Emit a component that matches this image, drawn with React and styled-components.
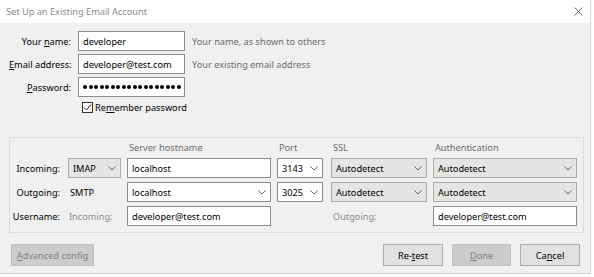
import React from 'react'
import styled, { createGlobalStyle } from 'styled-components'

const GlobalStyle = createGlobalStyle`
  html, body {
    margin: 0;
    padding: 0;
    background: #ffffff;
  }
  body {
    font-family: "Noto Sans", "Open Sans", sans-serif;
    font-size: 9.2px;
    line-height: 13px;
    color: #000;
  }
`

const Dialog = styled.div`
  width: 590px;
  height: 273px;
  border-right: 1px solid #d7d3c9;
  border-bottom: 1px solid #cfcfcf;
  background: #f0f0f0;
  display: flex;
  flex-direction: column;
  overflow: hidden;
`

const TitleBar = styled.div`
  height: 23px;
  flex: none;
  background: #fff;
  display: flex;
  align-items: center;
  justify-content: space-between;
  padding: 0 7px 0 6px;
  color: #8a8a8a;
`

const Body = styled.div`
  flex: 1;
  display: flex;
  flex-direction: column;
  padding: 8px 7px 0 9px;
`

const TopForm = styled.div`
  display: grid;
  grid-template-columns: 62px 107px auto;
  grid-template-rows: 20px 20px 20px 14px;
  column-gap: 7px;
  row-gap: 3px;
  align-items: center;
`

const Label = styled.label`
  text-align: right;
  white-space: nowrap;
`

const Hint = styled.span`
  color: #6d6d6d;
`

const TextInput = styled.div`
  box-sizing: border-box;
  height: 20px;
  width: ${(p) => p.$w || '100%'};
  border: 1px solid #8d8d8d;
  background: #fff;
  display: flex;
  align-items: center;
  gap: ${(p) => (p.$dots ? '1.5px' : '0')};
  padding: 0 4px;
  white-space: nowrap;
  overflow: hidden;
`

const Dot = styled.span`
  flex: none;
  width: 4px;
  height: 4px;
  border-radius: 50%;
  background: #000;
`

const CheckRow = styled.div`
  grid-column: 2 / 4;
  display: flex;
  align-items: center;
  gap: 2px;
  height: 14px;
  padding-left: 4px;
`

const Box = styled.span`
  box-sizing: border-box;
  width: 11px;
  height: 11px;
  border: 1px solid #333;
  background: #fff;
  display: flex;
  align-items: center;
  justify-content: center;
`

const Group = styled.div`
  margin-top: 23px;
  width: 575px;
  box-sizing: border-box;
  border: 1px solid #dcdcdc;
  padding: 3px 5px 6px 6px;
  display: grid;
  grid-template-columns: 46px 53px 144px 48px 96px 144px;
  grid-template-rows: 13px 20px 20px 20px;
  column-gap: 6px;
  row-gap: 4px;
  align-items: center;
`

const Head = styled.span`
  color: #6d6d6d;
  padding-left: 2px;
`

const GroupLabel = styled.span`
  white-space: nowrap;
  color: ${(p) => (p.$muted ? '#8c8c8c' : '#000')};
  padding-left: ${(p) => p.$pl || '0'};
  padding-right: ${(p) => (p.$left ? '0' : '2px')};
  justify-self: ${(p) => (p.$left ? 'start' : 'end')};
`

const Select = styled.div`
  box-sizing: border-box;
  height: 20px;
  width: ${(p) => p.$w || '100%'};
  border: 1px solid ${(p) => (p.$editable ? '#8d8d8d' : '#adadad')};
  background: ${(p) => (p.$editable ? '#fff' : '#e5e5e5')};
  display: flex;
  align-items: center;
  justify-content: space-between;
  padding: 0 4px;
  white-space: nowrap;
`

const Footer = styled.div`
  display: flex;
  align-items: center;
  margin-top: 11px;
  padding: 0 3px 0 2px;
`

const Button = styled.div`
  box-sizing: border-box;
  height: 22px;
  width: ${(p) => p.$w};
  margin-left: ${(p) => p.$ml || '0'};
  border: 1px solid ${(p) => (p.$disabled ? '#bfbfbf' : '#adadad')};
  background: ${(p) => (p.$disabled ? '#cccccc' : '#e1e1e1')};
  color: ${(p) => (p.$disabled ? '#838383' : '#000')};
  display: flex;
  align-items: center;
  justify-content: center;
  white-space: nowrap;
`

const Spacer = styled.div`
  flex: 1;
`

const Chevron = () => (
  <svg width="8" height="5" viewBox="0 0 8 5">
    <path d="M0.5 0.5 L4 4 L7.5 0.5" fill="none" stroke="#606060" strokeWidth="1" />
  </svg>
)

const DropDown = ({ value, w, editable }) => (
  <Select $w={w} $editable={editable}>
    <span>{value}</span>
    <Chevron />
  </Select>
)

export default function App() {
  return (
    <>
      <GlobalStyle />
      <Dialog>
        <TitleBar>
          <span>Set Up an Existing Email Account</span>
          <svg width="9" height="9" viewBox="0 0 9 9">
            <path d="M0.5 0.5 L8.5 8.5 M8.5 0.5 L0.5 8.5" stroke="#6a6a6a" strokeWidth="1" />
          </svg>
        </TitleBar>
        <Body>
          <TopForm>
            <Label>Your <u>n</u>ame:</Label>
            <TextInput>developer</TextInput>
            <Hint>Your name, as shown to others</Hint>
            <Label><u>E</u>mail address:</Label>
            <TextInput>developer@test.com</TextInput>
            <Hint>Your existing email address</Hint>
            <Label><u>P</u>assword:</Label>
            <TextInput $dots>
              {Array.from({ length: 18 }, (_, i) => <Dot key={i} />)}
            </TextInput>
            <span />
            <span />
            <CheckRow>
              <Box>
                <svg width="9" height="9" viewBox="0 0 9 9">
                  <path d="M1 4.5 L3.5 7 L8 1.5" fill="none" stroke="#222" strokeWidth="1" />
                </svg>
              </Box>
              <span>Re<u>m</u>ember password</span>
            </CheckRow>
          </TopForm>

          <Group>
            <span />
            <span />
            <Head>Server hostname</Head>
            <Head>Port</Head>
            <Head>SSL</Head>
            <Head>Authentication</Head>

            <GroupLabel>Incoming:</GroupLabel>
            <DropDown value="IMAP" />
            <TextInput>localhost</TextInput>
            <DropDown value="3143" w="46px" editable />
            <DropDown value="Autodetect" />
            <DropDown value="Autodetect" />

            <GroupLabel>Outgoing:</GroupLabel>
            <GroupLabel $left $pl="2px">SMTP</GroupLabel>
            <DropDown value="localhost" editable />
            <DropDown value="3025" w="46px" editable />
            <DropDown value="Autodetect" />
            <DropDown value="Autodetect" />

            <GroupLabel>Username:</GroupLabel>
            <GroupLabel $left $muted $pl="1px">Incoming:</GroupLabel>
            <TextInput>developer@test.com</TextInput>
            <span />
            <GroupLabel $left $muted $pl="2px">Outgoing:</GroupLabel>
            <TextInput>developer@test.com</TextInput>
          </Group>

          <Footer>
            <Button $w="83px" $disabled><span><u>A</u>dvanced config</span></Button>
            <Spacer />
            <Button $w="60px"><span>Re-<u>t</u>est</span></Button>
            <Button $w="59px" $ml="9px" $disabled><span><u>D</u>one</span></Button>
            <Button $w="60px" $ml="9px"><span>Ca<u>n</u>cel</span></Button>
          </Footer>
        </Body>
      </Dialog>
    </>
  )
}
